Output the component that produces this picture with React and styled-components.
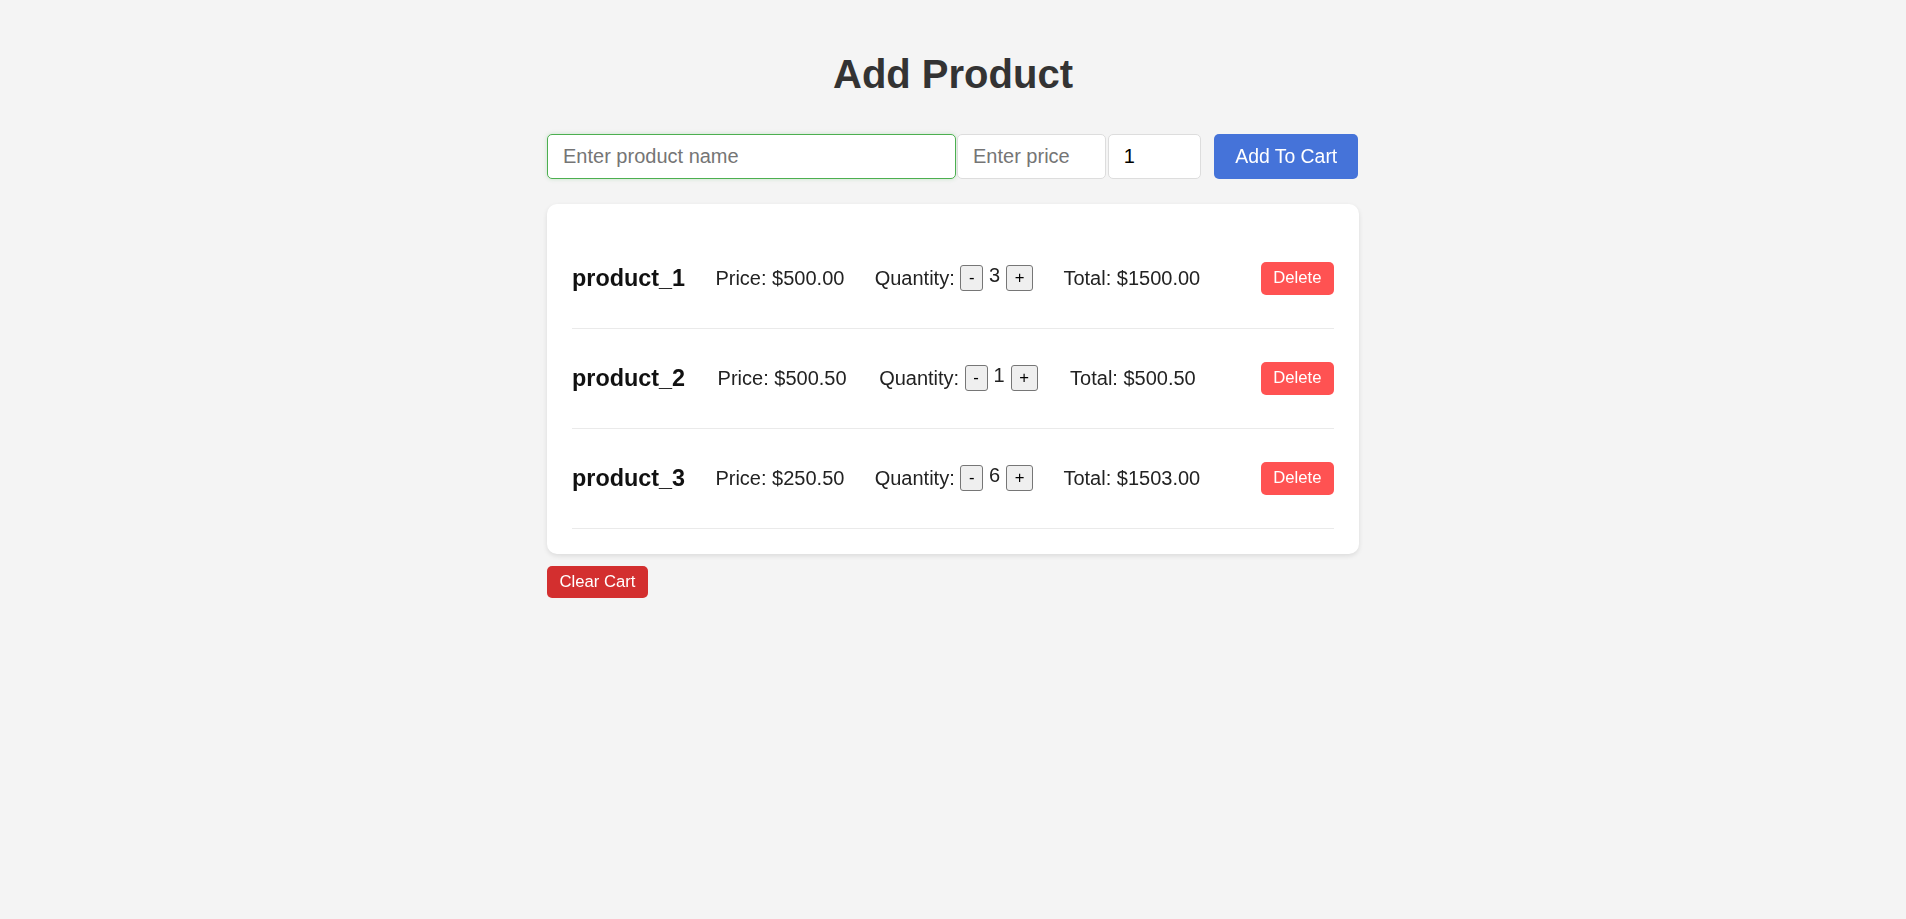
import React, { useState } from 'react';
import styled, { createGlobalStyle } from 'styled-components';

const GlobalStyle = createGlobalStyle`
  body {
    margin: 0;
    background: #f4f4f4;
    font-family: "Liberation Sans", Arial, sans-serif;
    color: #1a1a1a;
  }
`;

const Page = styled.div`
  width: 812px;
  margin: 0 auto;
  padding-top: 25px;
`;

const Title = styled.h1`
  margin: 26.4px 0 36.6px;
  font-size: 40px;
  line-height: 46px;
  font-weight: bold;
  text-align: center;
  color: #333;
`;

const Form = styled.form`
  display: flex;
  align-items: stretch;
  height: 45px;
  margin-bottom: 25px;
`;

const Input = styled.input`
  box-sizing: border-box;
  width: ${(p) => p.$w}px;
  height: 45px;
  margin-right: ${(p) => p.$gap || 0}px;
  padding: 0 15px;
  border: 1px solid ${(p) => (p.$focus ? '#4caf50' : '#ddd')};
  border-radius: 5px;
  background: #fff;
  font-family: inherit;
  font-size: 20px;
  color: #000;
  outline: none;
  caret-color: #000;
  box-shadow: ${(p) => (p.$focus ? '0 0 4px rgba(76, 175, 80, 0.25)' : 'none')};

  &::placeholder {
    color: #757575;
  }
`;

const AddButton = styled.button`
  width: 144.5px;
  height: 45px;
  margin-left: 12.5px;
  padding: 0;
  border: none;
  border-radius: 5px;
  background: #4573d9;
  color: #fff;
  font-family: inherit;
  font-size: 19.4px;
  cursor: pointer;
`;

const Card = styled.div`
  padding: 25px;
  background: #fff;
  border-radius: 10px;
  box-shadow: 0 2px 5px rgba(0, 0, 0, 0.1);
`;

const Row = styled.div`
  display: flex;
  align-items: center;
  justify-content: space-between;
  padding: 33px 0;
  border-bottom: 1px solid #eaeaea;
`;

const Name = styled.span`
  font-size: 23.4px;
  font-weight: bold;
  color: #111;
`;

const Price = styled.span`
  font-size: 20px;
  color: #222;
`;

const Qty = styled.div`
  display: flex;
  align-items: center;
  font-size: 20px;
  color: #222;
`;

const QtyLabel = styled.span`
  margin-right: 5.6px;
`;

const QtyValue = styled.span`
  margin: 0 6px;
  padding-bottom: 6px;
`;

const StepButton = styled.button`
  box-sizing: border-box;
  height: 26px;
  padding: 0 7.6px;
  border: 1px solid #767676;
  border-radius: 3px;
  background: #efefef;
  color: #000;
  font-family: inherit;
  font-size: 16.67px;
  line-height: 1;
`;

const Total = styled.span`
  font-size: 20px;
  color: #222;
`;

const Spacer = styled.span``;

const RedButton = styled.button`
  height: ${(p) => p.$h}px;
  padding: 0 12.5px;
  border: none;
  border-radius: 5px;
  background: ${(p) => p.$bg};
  color: #fff;
  font-family: inherit;
  font-size: 16.67px;
  cursor: pointer;
`;

const ClearWrap = styled.div`
  margin-top: 12.5px;
`;

const initial = [
  { name: 'product_1', price: 500, qty: 3 },
  { name: 'product_2', price: 500.5, qty: 1 },
  { name: 'product_3', price: 250.5, qty: 6 },
];

export default function App() {
  const [items, setItems] = useState(initial);

  const change = (i, d) =>
    setItems((list) =>
      list.map((it, k) => (k === i ? { ...it, qty: Math.max(1, it.qty + d) } : it))
    );

  return (
    <Page>
      <GlobalStyle />
      <Title>Add Product</Title>
      <Form onSubmit={(e) => e.preventDefault()}>
        <Input $w={408.5} $gap={1.5} $focus autoFocus placeholder="Enter product name" />
        <Input $w={149.2} $gap={1.5} placeholder="Enter price" />
        <Input $w={93.8} defaultValue="1" />
        <AddButton type="submit">Add To Cart</AddButton>
      </Form>
      <Card>
        {items.map((it, i) => (
          <Row key={it.name}>
            <Name>{it.name}</Name>
            <Price>Price: ${it.price.toFixed(2)}</Price>
            <Qty>
              <QtyLabel>Quantity:</QtyLabel>
              <StepButton onClick={() => change(i, -1)}>-</StepButton>
              <QtyValue>{it.qty}</QtyValue>
              <StepButton onClick={() => change(i, 1)}>+</StepButton>
            </Qty>
            <Total>Total: ${(it.price * it.qty).toFixed(2)}</Total>
            <Spacer />
            <RedButton $h={33} $bg="#ff5252">Delete</RedButton>
          </Row>
        ))}
      </Card>
      <ClearWrap>
        <RedButton $h={32} $bg="#d32f2f" onClick={() => setItems([])}>
          Clear Cart
        </RedButton>
      </ClearWrap>
    </Page>
  );
}
